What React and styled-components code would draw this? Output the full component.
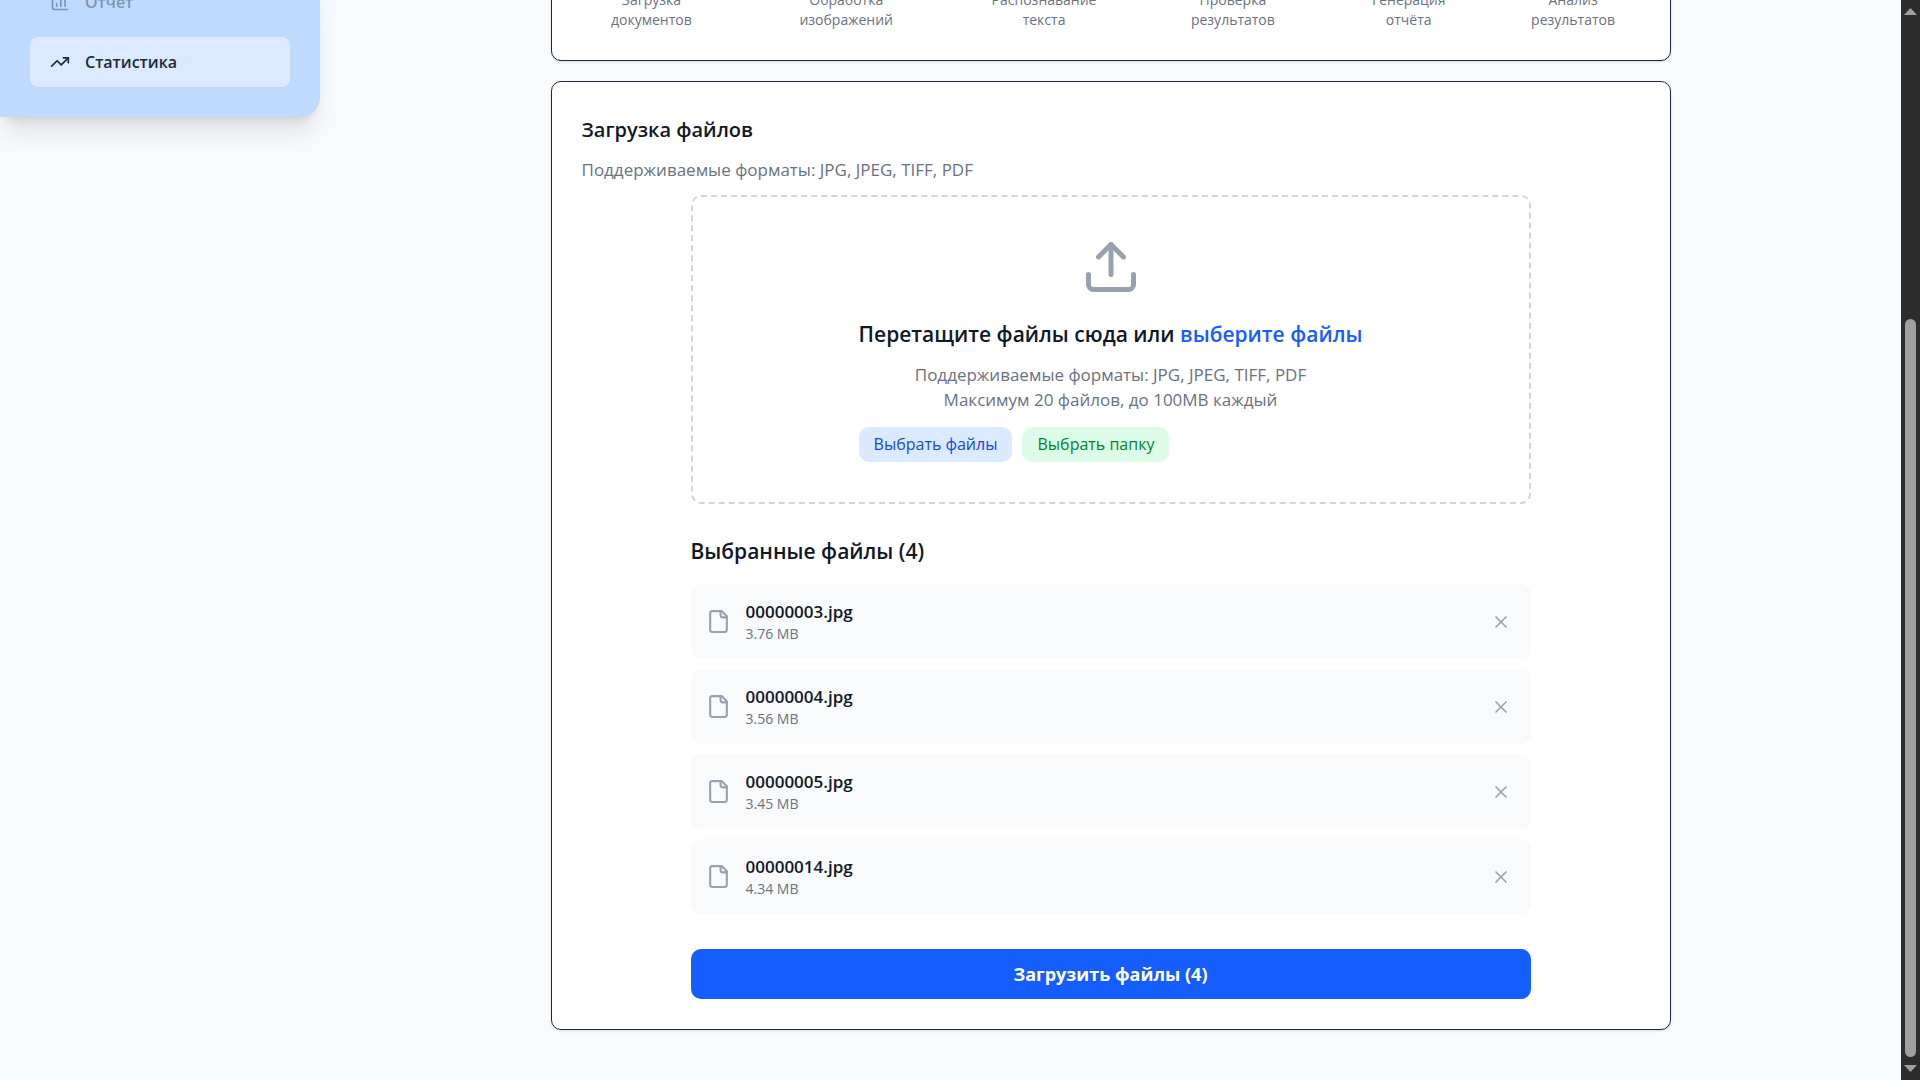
import React, { useState } from "react";
import styled, { createGlobalStyle } from "styled-components";
import { Upload, X, ChartColumn, TrendingUp } from "lucide-react";

const GlobalStyle = createGlobalStyle`
  *, *::before, *::after { box-sizing: border-box; }
  body {
    margin: 0;
    background: #f9fafb;
    color: #101828;
    font-family: "Open Sans", "Noto Sans", sans-serif;
    font-size: 17px;
    line-height: 25px;
  }
  h2, h3, p, ul { margin: 0; padding: 0; }
  button { font: inherit; border: 0; cursor: pointer; }
`;

const Shell = styled.div`
  display: flex;
  height: 100vh;
  overflow: hidden;
`;

const Sidebar = styled.nav`
  flex: 0 0 320px;
  align-self: flex-start;
  display: flex;
  flex-direction: column;
  gap: 10px;
  margin-top: -23px;
  padding: 0 30px 30px;
  background: #bedbff;
  border-radius: 0 0 20px 0;
  box-shadow: 0 20px 25px -5px rgb(0 0 0 / 0.1), 0 8px 10px -6px rgb(0 0 0 / 0.1);
`;

const NavItem = styled.a`
  display: flex;
  align-items: center;
  gap: 15px;
  height: 50px;
  padding: 0 20px;
  border-radius: 8px;
  color: #1d293d;
  background: ${(p) => (p.$active ? "#dbeafe" : "transparent")};
  font-size: 16px;
  font-weight: 600;
  text-decoration: none;

  & > * { opacity: ${(p) => (p.$muted ? 0.4 : 1)}; }
`;

const Main = styled.main`
  flex: 1;
  min-width: 0;
  display: flex;
  flex-direction: column;
  justify-content: flex-end;
  align-items: center;
  gap: 20px;
  padding: 0 20px 50px;
`;

const Card = styled.section`
  flex: none;
  width: 100%;
  max-width: 1120px;
  padding: 30px;
  background: #ffffff;
  border: 1px solid #1d293d;
  border-radius: 10px;
  box-shadow: 0 1px 3px rgb(0 0 0 / 0.1), 0 1px 2px -1px rgb(0 0 0 / 0.1);
`;

const Steps = styled.ul`
  display: grid;
  grid-template-columns: 140fr 174fr 146fr 156fr 120fr 133fr;
  column-gap: 38px;
  list-style: none;
`;

const Step = styled.li`
  color: #6a7282;
  font-size: 14px;
  line-height: 20px;
  text-align: center;
`;

const CardTitle = styled.h2`
  margin-bottom: 10px;
  font-size: 20px;
  line-height: 35px;
  font-weight: 600;
`;

const Hint = styled.p`
  color: #6a7282;
  font-size: 17px;
  line-height: 25px;
`;

const Uploader = styled.div`
  width: 100%;
  max-width: 840px;
  margin: 13px auto 0;
`;

const DropZone = styled.div`
  display: flex;
  flex-direction: column;
  align-items: center;
  padding: 40px;
  border: 2px dashed #d1d5dc;
  border-radius: 10px;
  text-align: center;
`;

const UploadIcon = styled(Upload)`
  display: block;
  margin-bottom: 20px;
  color: #99a1af;
`;

const DropTitle = styled.h3`
  margin-bottom: 10px;
  font-size: 21px;
  line-height: 35px;
  font-weight: 600;
`;

const PickLink = styled.button`
  padding: 0;
  background: none;
  color: #155dfc;
`;

const PickRow = styled.div`
  display: flex;
  gap: 10px;
  margin-top: 15px;
`;

const PickButton = styled.button`
  height: 35px;
  padding: 0 15px;
  border-radius: 10px;
  background: ${(p) => (p.$green ? "#dcfce7" : "#dbeafe")};
  color: ${(p) => (p.$green ? "#008236" : "#1447e6")};
  font-size: 16px;
`;

const ListTitle = styled.h3`
  margin: 30px 0 15px;
  font-size: 21px;
  line-height: 35px;
  font-weight: 600;
`;

const FileList = styled.ul`
  display: flex;
  flex-direction: column;
  gap: 10px;
  list-style: none;
`;

const FileRow = styled.li`
  display: flex;
  align-items: center;
  gap: 15px;
  padding: 15px;
  border-radius: 10px;
  background: #f9fafb;
  color: #99a1af;
`;

const FileInfo = styled.div`
  flex: 1;
  min-width: 0;
`;

const FileName = styled.p`
  color: #101828;
  font-weight: 600;
`;

const FileSize = styled.p`
  color: #6a7282;
  font-size: 14px;
  line-height: 20px;
`;

const RemoveButton = styled.button`
  display: flex;
  padding: 5px;
  background: none;
  color: inherit;
`;

const SubmitButton = styled.button`
  width: 100%;
  height: 50px;
  margin-top: 35px;
  border-radius: 10px;
  background: #155dfc;
  color: #ffffff;
  font-size: 18px;
  font-weight: 700;
`;

const ScrollBar = styled.div`
  flex: 0 0 19px;
  display: flex;
  flex-direction: column;
  align-items: center;
  background: #2c2c2c;
`;

const ScrollArrow = styled.button`
  display: flex;
  justify-content: center;
  align-items: ${(p) => (p.$up ? "flex-end" : "flex-start")};
  width: 19px;
  height: 15px;
  padding: 0;
  background: none;
`;

const ScrollTrack = styled.div`
  flex: 1;
  display: grid;
  grid-template-rows: 304fr 738fr 8fr;
`;

const ScrollThumb = styled.div`
  grid-row: 2;
  width: 11px;
  border-radius: 6px;
  background: #9f9f9f;
`;

function FileIcon() {
  return (
    <svg width="25" height="25" viewBox="0 0 24 24" fill="none" stroke="currentColor" strokeWidth="2" strokeLinecap="round" strokeLinejoin="round" aria-hidden="true">
      <path d="M15 2H6a2 2 0 0 0-2 2v16a2 2 0 0 0 2 2h12a2 2 0 0 0 2-2V7Z" />
      <path d="M14 2v4a2 2 0 0 0 2 2h4" />
    </svg>
  );
}

const steps = [
  ["Загрузка", "документов"],
  ["Обработка", "изображений"],
  ["Распознавание", "текста"],
  ["Проверка", "результатов"],
  ["Генерация", "отчёта"],
  ["Анализ", "результатов"],
];

const initialFiles = [
  { name: "00000003.jpg", size: "3.76 MB" },
  { name: "00000004.jpg", size: "3.56 MB" },
  { name: "00000005.jpg", size: "3.45 MB" },
  { name: "00000014.jpg", size: "4.34 MB" },
];

export default function App() {
  const [files, setFiles] = useState(initialFiles);
  const remove = (name) => setFiles(files.filter((f) => f.name !== name));

  return (
    <>
      <GlobalStyle />
      <Shell>
        <Sidebar>
          <NavItem href="#report" $muted>
            <ChartColumn size={20} />
            <span>Отчет</span>
          </NavItem>
          <NavItem href="#stats" $active>
            <TrendingUp size={20} />
            <span>Статистика</span>
          </NavItem>
        </Sidebar>

        <Main>
          <Card>
            <Steps>
              {steps.map(([first, second]) => (
                <Step key={first}>
                  {first}
                  <br />
                  {second}
                </Step>
              ))}
            </Steps>
          </Card>

          <Card>
            <CardTitle>Загрузка файлов</CardTitle>
            <Hint>Поддерживаемые форматы: JPG, JPEG, TIFF, PDF</Hint>

            <Uploader>
              <DropZone>
                <UploadIcon size={60} />
                <div>
                  <DropTitle>
                    Перетащите файлы сюда или <PickLink type="button">выберите файлы</PickLink>
                  </DropTitle>
                  <Hint>Поддерживаемые форматы: JPG, JPEG, TIFF, PDF</Hint>
                  <Hint>Максимум 20 файлов, до 100MB каждый</Hint>
                  <PickRow>
                    <PickButton type="button">Выбрать файлы</PickButton>
                    <PickButton type="button" $green>Выбрать папку</PickButton>
                  </PickRow>
                </div>
              </DropZone>

              <ListTitle>Выбранные файлы ({files.length})</ListTitle>
              <FileList>
                {files.map((file) => (
                  <FileRow key={file.name}>
                    <FileIcon />
                    <FileInfo>
                      <FileName>{file.name}</FileName>
                      <FileSize>{file.size}</FileSize>
                    </FileInfo>
                    <RemoveButton type="button" aria-label={`Удалить ${file.name}`} onClick={() => remove(file.name)}>
                      <X size={20} />
                    </RemoveButton>
                  </FileRow>
                ))}
              </FileList>
              <SubmitButton type="button">Загрузить файлы ({files.length})</SubmitButton>
            </Uploader>
          </Card>
        </Main>

        <ScrollBar>
          <ScrollArrow type="button" $up aria-label="Вверх">
            <svg width="13" height="7" viewBox="0 0 13 7" fill="#9f9f9f"><path d="M6.5 0L13 7H0z" /></svg>
          </ScrollArrow>
          <ScrollTrack>
            <ScrollThumb />
          </ScrollTrack>
          <ScrollArrow type="button" aria-label="Вниз">
            <svg width="13" height="7" viewBox="0 0 13 7" fill="#9f9f9f"><path d="M0 0h13L6.5 7z" /></svg>
          </ScrollArrow>
        </ScrollBar>
      </Shell>
    </>
  );
}
